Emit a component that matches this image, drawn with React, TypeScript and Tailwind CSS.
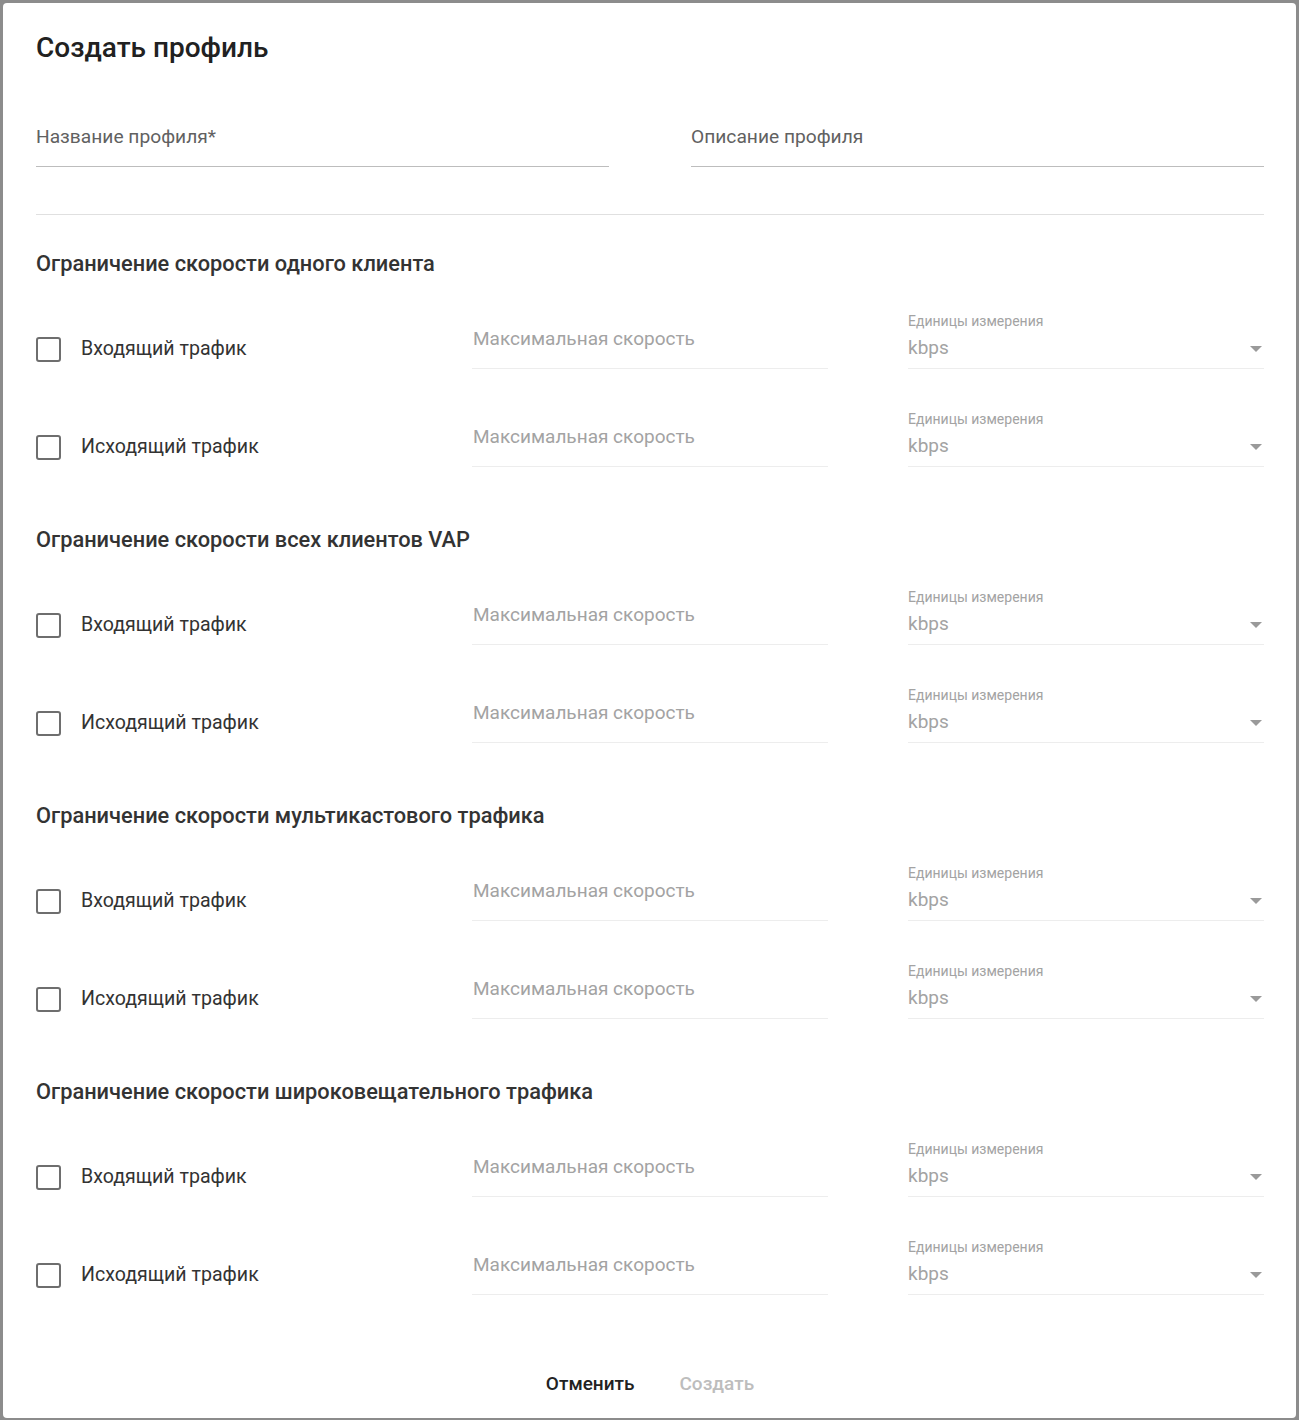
import React from "react";

function Checkbox() {
  return <div className="w-[25px] h-[25px] shrink-0 rounded-[3px] border-2 border-[#6e6e6e] bg-white" />;
}

function Row({ label }: { label: string }) {
  return (
    <div className="grid grid-cols-3 gap-x-[80px] h-[58px]">
      <div className="flex items-center pt-[18px] gap-[20px]">
        <Checkbox />
        <span className="text-[19.6px] leading-[24px] text-[#333333]">{label}</span>
      </div>
      <div className="flex flex-col border-b border-[#ededed]">
        <span className="pl-px pt-[16px] text-[19px] leading-[24px] text-[#a3a3a3]">Максимальная скорость</span>
      </div>
      <div className="flex flex-col border-b border-[#ededed]">
        <span className="pt-[2px] text-[14px] leading-[16px] text-[#a3a3a3]">Единицы измерения</span>
        <div className="mt-[7px] flex items-center justify-between">
          <span className="text-[19px] leading-[24px] text-[#a3a3a3]">kbps</span>
          <svg width="12" height="6" viewBox="0 0 12 6" className="mr-[2px] mt-[2px]">
            <path d="M0 0 L12 0 L6 6 Z" fill="#9a9a9a" />
          </svg>
        </div>
      </div>
    </div>
  );
}

function Section({ title, first }: { title: string; first?: boolean }) {
  return (
    <div className={first ? "mt-[37px]" : "mt-[61px]"}>
      <div className="text-[21.8px] leading-[24px] font-medium text-[#333333]">{title}</div>
      <div className="mt-[35px] flex flex-col gap-[40px]">
        <Row label="Входящий трафик" />
        <Row label="Исходящий трафик" />
      </div>
    </div>
  );
}

export default function App() {
  return (
    <div className="min-h-[1420px] bg-[#8c8c8c] p-[3px] pb-0" style={{ fontFamily: "Roboto, 'Noto Sans', sans-serif" }}>
      <div className="bg-white rounded-[4px] h-[1415px] pl-[33px] pr-[32px] pt-[29px]">
        <h1 className="text-[28px] leading-[32px] font-medium text-[#212121]">Создать профиль</h1>
        <div className="mt-[61px] grid grid-cols-2 gap-x-[82px]">
          <div className="border-b border-[#bdbdbd] pb-[16px]">
            <span className="text-[19.2px] leading-[24px] text-[#616161]">Название профиля*</span>
          </div>
          <div className="border-b border-[#bdbdbd] pb-[16px]">
            <span className="text-[19.2px] leading-[24px] text-[#616161]">Описание профиля</span>
          </div>
        </div>
        <div className="mt-[47px] h-px bg-[#e0e0e0]" />
        <Section first title="Ограничение скорости одного клиента" />
        <Section title="Ограничение скорости всех клиентов VAP" />
        <Section title="Ограничение скорости мультикастового трафика" />
        <Section title="Ограничение скорости широковещательного трафика" />
        <div className="mt-[71px] flex justify-center gap-[21px]">
          <button className="h-[36px] px-[12px] text-[19px] font-medium text-[#222222]">Отменить</button>
          <button className="h-[36px] px-[12px] text-[19px] font-medium text-[#bdbdbd]">Создать</button>
        </div>
      </div>
    </div>
  );
}
